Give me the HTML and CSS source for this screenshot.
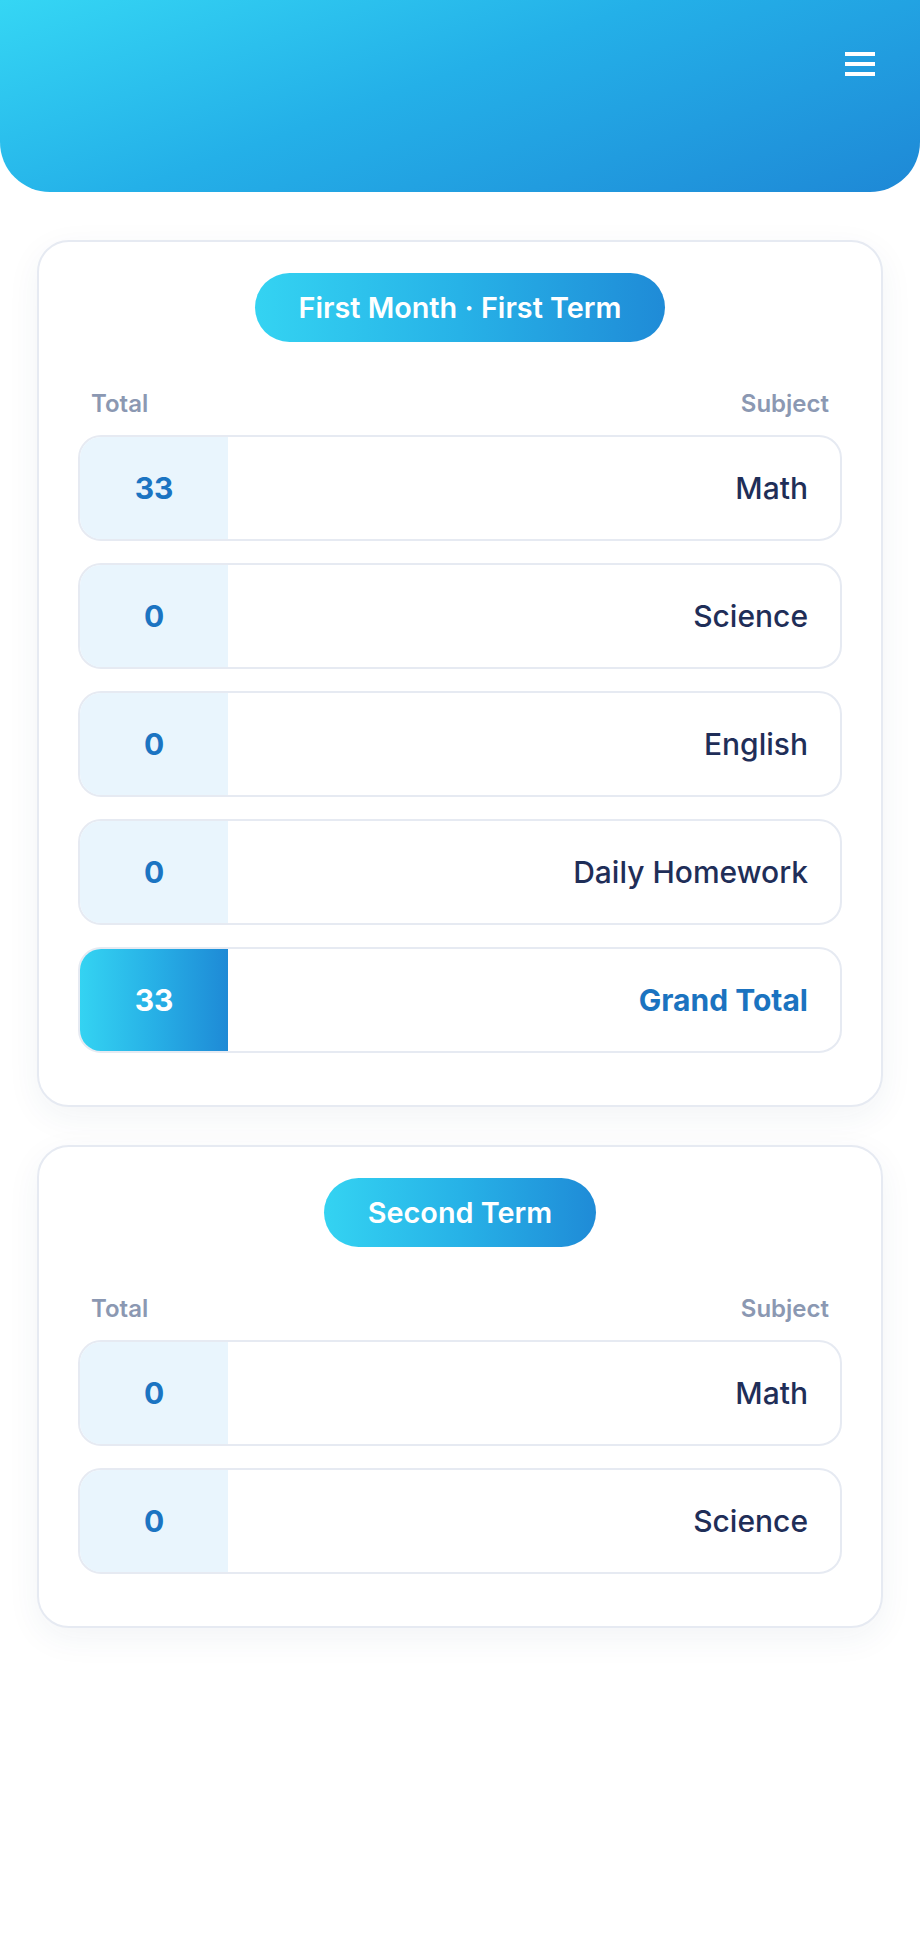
FILE: index.html
```html
<!DOCTYPE html>
<html lang="en">
<head>
<meta charset="utf-8">
<title>Grades</title>
<link rel="stylesheet" href="styles.css">
</head>
<body>
<header class="top-bar">
  <button class="menu-btn" aria-label="Menu">
    <span class="menu-line"></span>
    <span class="menu-line"></span>
    <span class="menu-line"></span>
  </button>
</header>

<main class="content">
  <section class="term-card">
    <div class="term-title-wrap"><h2 class="term-title">First Month · First Term</h2></div>
    <div class="col-labels">
      <span class="col-label">Total</span>
      <span class="col-label">Subject</span>
    </div>
    <div class="grade-list">
      <div class="grade-row"><div class="grade-value">33</div><div class="grade-subject">Math</div></div>
      <div class="grade-row"><div class="grade-value">0</div><div class="grade-subject">Science</div></div>
      <div class="grade-row"><div class="grade-value">0</div><div class="grade-subject">English</div></div>
      <div class="grade-row"><div class="grade-value">0</div><div class="grade-subject">Daily Homework</div></div>
      <div class="grade-row grade-row--total"><div class="grade-value">33</div><div class="grade-subject">Grand Total</div></div>
    </div>
  </section>

  <section class="term-card">
    <div class="term-title-wrap"><h2 class="term-title">Second Term</h2></div>
    <div class="col-labels">
      <span class="col-label">Total</span>
      <span class="col-label">Subject</span>
    </div>
    <div class="grade-list">
      <div class="grade-row"><div class="grade-value">0</div><div class="grade-subject">Math</div></div>
      <div class="grade-row"><div class="grade-value">0</div><div class="grade-subject">Science</div></div>
    </div>
  </section>
</main>
</body>
</html>
```

FILE: styles.css
```css
* { box-sizing: border-box; }

html, body {
  margin: 0;
  padding: 0;
  background: #ffffff;
  font-family: "Inter", "Noto Sans", "Liberation Sans", sans-serif;
}

.top-bar {
  height: 192px;
  border-radius: 0 0 50px 50px;
  background: linear-gradient(160deg, #35d6f4 0%, #24b0e8 45%, #1e88d6 100%);
  display: flex;
  justify-content: flex-end;
  align-items: flex-start;
  padding: 52px 45px 0 0;
}

.menu-btn {
  background: none;
  border: 0;
  padding: 0;
  width: 30px;
  display: flex;
  flex-direction: column;
  gap: 6px;
  cursor: pointer;
}

.menu-line {
  display: block;
  width: 30px;
  height: 4px;
  background: #ffffff;
}

.content {
  padding: 48px 37px 0;
}

.term-card {
  background: #ffffff;
  border: 2px solid #e6eaf2;
  border-radius: 32px;
  padding: 31px 39px 52px;
  margin-bottom: 38px;
  box-shadow: 0 10px 34px rgba(40, 60, 110, 0.06);
}

.term-title-wrap {
  display: flex;
  justify-content: center;
  margin-bottom: 47px;
}

.term-title {
  margin: 0;
  height: 69px;
  line-height: 69px;
  padding: 0 44px;
  border-radius: 35px;
  background: linear-gradient(90deg, #34d3f2 0%, #27b2e7 50%, #1f8bd7 100%);
  color: #ffffff;
  font-size: 28.8px;
  font-weight: 600;
  white-space: nowrap;
}

.col-labels {
  display: flex;
  justify-content: space-between;
  padding: 0 13px;
  margin-bottom: 17px;
}

.col-label {
  font-size: 24px;
  line-height: 29px;
  font-weight: 600;
  color: #8b98b2;
}

.grade-list {
  display: flex;
  flex-direction: column;
  gap: 22px;
}

.grade-row {
  display: flex;
  height: 106px;
  border: 2px solid #e6eaf2;
  border-radius: 23px;
  overflow: hidden;
  background: #ffffff;
}

.grade-value {
  width: 148px;
  flex: none;
  display: flex;
  align-items: center;
  justify-content: center;
  background: #e9f5fd;
  color: #1b74c2;
  font-size: 30px;
  font-weight: 700;
}

.grade-subject {
  flex: 1;
  display: flex;
  align-items: center;
  justify-content: flex-end;
  padding-right: 32px;
  color: #1f2e58;
  font-size: 30px;
  font-weight: 500;
}

.grade-row--total .grade-value {
  background: linear-gradient(90deg, #34d3f2 0%, #27b0e6 50%, #1e8ad6 100%);
  color: #ffffff;
}

.grade-row--total .grade-subject {
  color: #1b73c0;
  font-weight: 700;
}
```
